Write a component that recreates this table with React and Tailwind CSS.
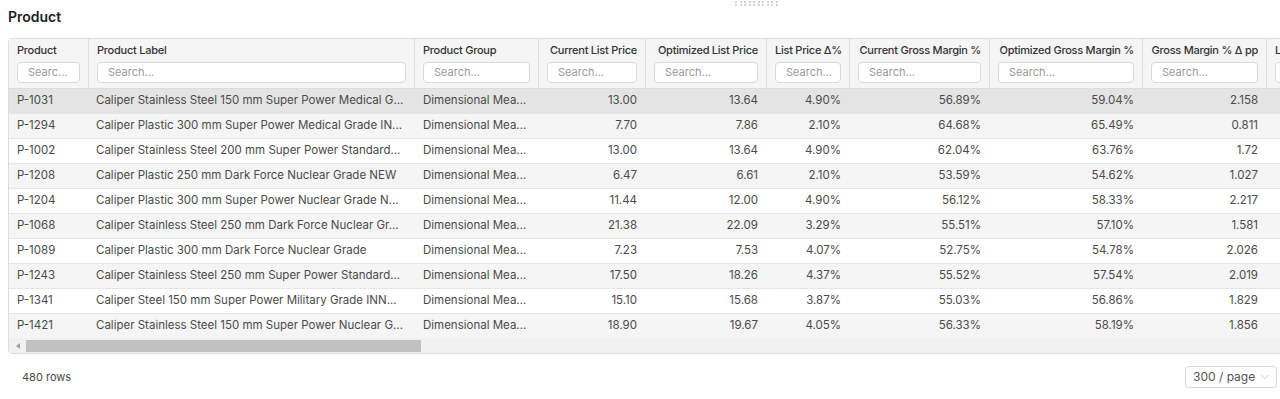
import React from 'react';
import { ChevronDown } from 'lucide-react';

const columns = [
    { key: 'id', label: 'Product', width: 'w-[80px]', align: 'left', placeholder: 'Searc...' },
    { key: 'label', label: 'Product Label', width: 'w-[326px]', align: 'left', placeholder: 'Search...' },
    { key: 'group', label: 'Product Group', width: 'w-[124px]', align: 'left', placeholder: 'Search...' },
    { key: 'clp', label: 'Current List Price', width: 'w-[107px]', align: 'right', placeholder: 'Search...' },
    { key: 'olp', label: 'Optimized List Price', width: 'w-[121px]', align: 'right', placeholder: 'Search...' },
    { key: 'lpd', label: 'List Price Δ%', width: 'w-[83px]', align: 'right', placeholder: 'Search...' },
    { key: 'cgm', label: 'Current Gross Margin %', width: 'w-[140px]', align: 'right', placeholder: 'Search...' },
    { key: 'ogm', label: 'Optimized Gross Margin %', width: 'w-[153px]', align: 'right', placeholder: 'Search...' },
    { key: 'gmd', label: 'Gross Margin % Δ pp', width: 'w-[124px]', align: 'right', placeholder: 'Search...' },
    { key: 'lv', label: 'Lost Volume %', width: 'w-[120px]', align: 'left', placeholder: 'Search...' },
];

const rows = [
    ['P-1031', 'Caliper Stainless Steel 150 mm Super Power Medical G...', '13.00', '13.64', '4.90%', '56.89%', '59.04%', '2.158'],
    ['P-1294', 'Caliper Plastic 300 mm Super Power Medical Grade IN...', '7.70', '7.86', '2.10%', '64.68%', '65.49%', '0.811'],
    ['P-1002', 'Caliper Stainless Steel 200 mm Super Power Standard...', '13.00', '13.64', '4.90%', '62.04%', '63.76%', '1.72'],
    ['P-1208', 'Caliper Plastic 250 mm Dark Force Nuclear Grade NEW', '6.47', '6.61', '2.10%', '53.59%', '54.62%', '1.027'],
    ['P-1204', 'Caliper Plastic 300 mm Super Power Nuclear Grade N...', '11.44', '12.00', '4.90%', '56.12%', '58.33%', '2.217'],
    ['P-1068', 'Caliper Stainless Steel 250 mm Dark Force Nuclear Gr...', '21.38', '22.09', '3.29%', '55.51%', '57.10%', '1.581'],
    ['P-1089', 'Caliper Plastic 300 mm Dark Force Nuclear Grade', '7.23', '7.53', '4.07%', '52.75%', '54.78%', '2.026'],
    ['P-1243', 'Caliper Stainless Steel 250 mm Super Power Standard...', '17.50', '18.26', '4.37%', '55.52%', '57.54%', '2.019'],
    ['P-1341', 'Caliper Steel 150 mm Super Power Military Grade INN...', '15.10', '15.68', '3.87%', '55.03%', '56.86%', '1.829'],
    ['P-1421', 'Caliper Stainless Steel 150 mm Super Power Nuclear G...', '18.90', '19.67', '4.05%', '56.33%', '58.19%', '1.856'],
];

const rowBg = (i) => {
    if (i === 0) return 'bg-[#e4e4e4]';
    return i % 2 === 1 ? 'bg-[#f5f5f5]' : 'bg-white';
};

const cellValue = (row, j) => {
    if (j < 2) return row[j];
    if (j === 2) return 'Dimensional Mea...';
    if (j < 9) return row[j - 1];
    return '';
};

const App = () => {
    return (
        <div className="w-[1280px] h-[399px] overflow-hidden bg-white text-[#4a4a4a]" style={{ fontFamily: 'Inter, "Noto Sans", sans-serif' }}>

            {/* poignée de redimensionnement */}
            <div className="h-[6px] pl-[735px] pt-[1px]">
                <div className="grid grid-cols-10 gap-x-[2px] gap-y-[1px] w-[43px]">
                    {Array.from({ length: 20 }).map((_, i) => (
                        <div key={i} className="w-[2px] h-[2px] bg-[#d4d4d4]" />
                    ))}
                </div>
            </div>

            <h2 className="pl-2 pt-[1px] text-[14px] leading-[20px] font-semibold text-[#222] mb-[11px]">
                Product
            </h2>

            {/* tableau */}
            <div className="ml-2 w-[1320px] border border-[#dcdcdc] rounded-[4px] overflow-hidden">

                {/* entête */}
                <div className="flex bg-[#f5f5f5] border-b border-[#dcdcdc] h-[50px]">
                    {columns.map((col) => (
                        <div key={col.key} className={`${col.width} shrink-0 border-r border-[#dcdcdc] px-2 pt-[3px]`}>
                            <div className={`text-[11px] leading-[16px] font-medium text-[#333] whitespace-nowrap tracking-[-0.25px] ${col.align === 'right' ? 'text-right' : 'text-left'}`}>
                                {col.label}
                            </div>
                            <div className="mt-[4px] h-[21px] bg-white border border-[#d9d9d9] rounded-[4px] pl-[10px] pr-[4px] flex items-center overflow-hidden">
                                <span className="text-[11px] text-[#9a9a9a] whitespace-nowrap">{col.placeholder}</span>
                            </div>
                        </div>
                    ))}
                </div>

                {/* lignes */}
                {rows.map((row, i) => (
                    <div key={row[0]} className={`flex h-[25px] border-b border-[#e6e6e6] ${rowBg(i)}`}>
                        {columns.map((col, j) => (
                            <div
                                key={col.key}
                                className={`${col.width} shrink-0 flex items-center text-[11.5px] overflow-hidden whitespace-nowrap ${col.align === 'right' ? 'justify-end pr-[9px]' : j === 1 ? 'pl-[7px] pr-1' : 'pl-2 pr-1'}`}
                            >
                                <span className="whitespace-nowrap">{cellValue(row, j)}</span>
                            </div>
                        ))}
                    </div>
                ))}

                {/* barre de défilement */}
                <div className="flex items-center h-[15px] bg-[#f1f1f1] -mt-px">
                    <div className="w-[17px] flex justify-center">
                        <div className="w-0 h-0 border-y-[3px] border-y-transparent border-r-[4px] border-r-[#a3a3a3]" />
                    </div>
                    <div className="w-[395px] h-[12px] bg-[#c1c1c1]" />
                </div>
            </div>

            {/* pied */}
            <div className="flex items-center justify-between pl-[22px] pr-[3px] mt-[12px]">
                <span className="text-[11px] text-[#4a4a4a]">480 rows</span>
                <div className="flex items-center w-[92px] h-[22px] border border-[#d9d9d9] rounded-[4px] pl-[7px] gap-[3px]">
                    <span className="text-[12px] text-[#555]">300 / page</span>
                    <ChevronDown className="w-[14px] h-[14px] text-[#c4c4c4]" strokeWidth={1.5} />
                </div>
            </div>
        </div>
    );
};

export default App;
